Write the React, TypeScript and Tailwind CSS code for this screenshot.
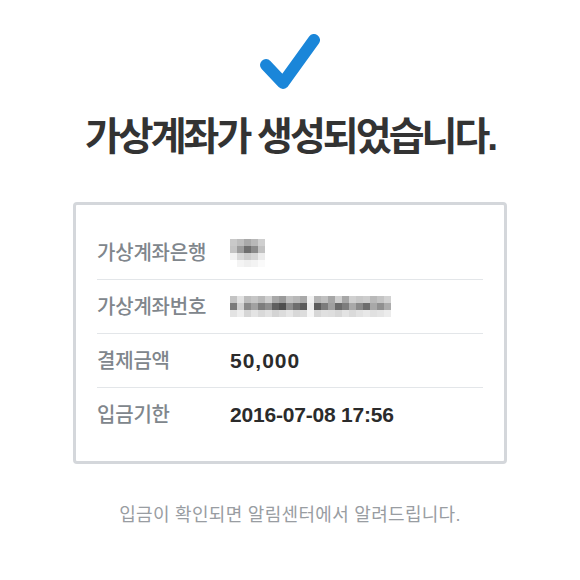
import React from 'react';

const bankMosaic: string[][] = [
  ['#c9c9c9', '#bdbdbd', '#a9a9a9', '#b8b8b8', '#cfcfcf'],
  ['#c4c4c4', '#9c9c9c', '#6f6f6f', '#8b8b8b', '#c2c2c2'],
  ['#f2f2f2', '#d9d9d9', '#cccccc', '#d6d6d6', '#ececec'],
  ['#ffffff', '#f4f4f4', '#efefef', '#f3f3f3', '#fafafa'],
];

const accountMosaic: string[][] = [
  ['#c4c4c4', '#e2e2e2', '#bdbdbd', '#c6c6c6', '#b9b9b9', '#cfcfcf', '#a8a8a8', '#9a9a9a', '#c1c1c1', '#b8b8b8', '#a9a9a9', '#f2f2f2', '#b5b5b5', '#c0c0c0', '#a6a6a6', '#cfcfcf', '#a7a7a7', '#d0d0d0', '#c8c8c8', '#cdcdcd', '#b9b9b9', '#c4c4c4', '#d2d2d2'],
  ['#7b7b7b', '#d0d0d0', '#8a8a8a', '#a1a1a1', '#7d7d7d', '#8e8e8e', '#5f5f5f', '#4f4f4f', '#8c8c8c', '#6e6e6e', '#5a5a5a', '#ebebeb', '#5c5c5c', '#7c7c7c', '#9f9f9f', '#6a6a6a', '#7d7d7d', '#a9a9a9', '#8a8a8a', '#6e6e6e', '#a8a8a8', '#909090', '#acacac'],
  ['#e3e3e3', '#eeeeee', '#d6d6d6', '#e4e4e4', '#d9d9d9', '#e2e2e2', '#d4d4d4', '#dcdcdc', '#e6e6e6', '#d8d8d8', '#dddddd', '#f6f6f6', '#d7d7d7', '#e0e0e0', '#dedede', '#d7d7d7', '#e3e3e3', '#dadada', '#e2e2e2', '#e8e8e8', '#e1e1e1', '#e5e5e5', '#ececec'],
];

function Mosaic({ cells }: { cells: string[][] }) {
  return (
    <div className="flex flex-col">
      {cells.map((row, r) => (
        <div key={r} className="flex">
          {row.map((c, i) => (
            <div key={i} className="w-[7px] h-[7px]" style={{ backgroundColor: c }} />
          ))}
        </div>
      ))}
    </div>
  );
}

const rows = [
  { label: '가상계좌은행', value: <Mosaic cells={bankMosaic} /> },
  { label: '가상계좌번호', value: <Mosaic cells={accountMosaic} /> },
  { label: '결제금액', value: <span className="tracking-[1px]">50,000</span> },
  { label: '입금기한', value: <span className="tracking-[-0.2px]">2016-07-08 17:56</span> },
];

export default function App() {
  return (
    <div
      className="w-[580px] h-[580px] bg-white flex flex-col items-center"
      style={{ fontFamily: '"Liberation Sans", "Noto Sans CJK KR", sans-serif' }}
    >
      <svg className="mt-[32px]" width="60" height="62" viewBox="0 0 60 62">
        <path
          d="M6 33 L23 51 L54 8"
          fill="none"
          stroke="#1a86d9"
          strokeWidth="12"
          strokeLinecap="round"
          strokeLinejoin="round"
        />
      </svg>

      <h1 className="mt-[20px] text-[39px] leading-[46px] font-bold tracking-[-3px] text-[#333333]">
        가상계좌가 생성되었습니다.
      </h1>

      <div className="mt-[42px] w-[434px] border-[3px] border-[#d4d7db] rounded-[4px] px-[21px] pt-[21px] pb-[19px]">
        {rows.map((row, i) => (
          <div
            key={row.label}
            className={`flex items-center h-[54px] ${i < rows.length - 1 ? 'border-b border-[#e3e6e9]' : ''}`}
          >
            <div className="w-[133px] text-[20px] font-medium tracking-[-0.2px] text-[#80868c]">{row.label}</div>
            <div className="text-[21px] font-bold text-[#2b2b2b]">{row.value}</div>
          </div>
        ))}
      </div>

      <p className="mt-[38px] text-[18px] tracking-[0.3px] text-[#999da2]">
        입금이 확인되면 알림센터에서 알려드립니다.
      </p>
    </div>
  );
}
